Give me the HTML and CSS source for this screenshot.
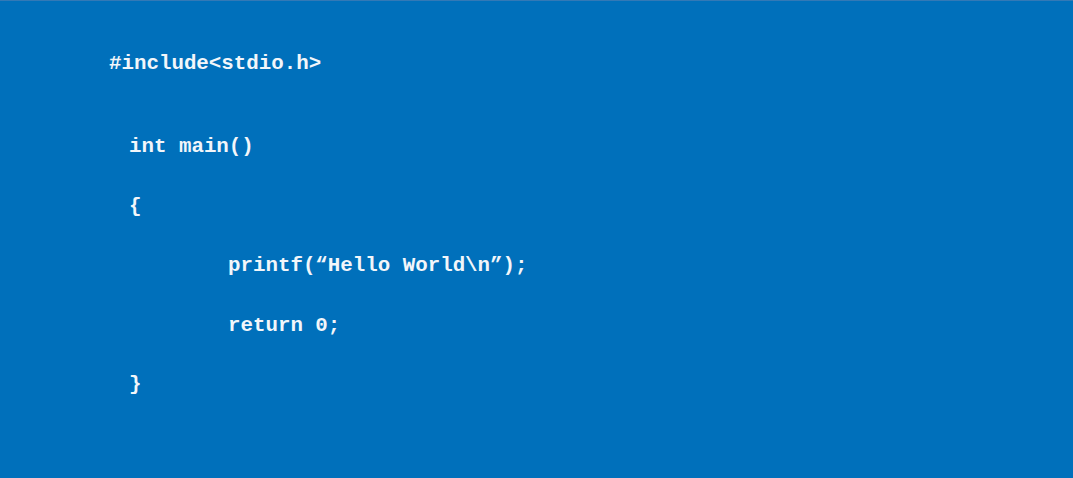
FILE: index.html
```html
<!DOCTYPE html>
<html>
<head>
<meta charset="utf-8">
<link rel="stylesheet" href="styles.css">
</head>
<body>
<div class="slide">
  <div class="code">
    <div class="line l0">#include&lt;stdio.h&gt;</div>
    <div class="line l1 first">int main()</div>
    <div class="line l1">{</div>
    <div class="line l2">printf(“Hello World\n”);</div>
    <div class="line l2">return 0;</div>
    <div class="line l1">}</div>
  </div>
</div>
</body>
</html>
```
FILE: styles.css
```css
html, body {
  margin: 0;
  padding: 0;
  width: 1073px;
  height: 478px;
  overflow: hidden;
  background: #0070bb;
}
.slide {
  box-sizing: border-box;
  width: 1073px;
  height: 478px;
  background: #0070bb;
  border-top: 1px solid #3379b6;
  padding-top: 33px;
}
.code {
  display: flex;
  flex-direction: column;
  font-family: "Liberation Mono", "Courier New", monospace;
  font-weight: bold;
  font-size: 20.8px;
  color: #f2f6fa;
  white-space: pre;
}
.line {
  height: 59.5px;
  line-height: 59.5px;
}
.first {
  margin-top: 23.5px;
}
.l0 { padding-left: 109px; }
.l1 { padding-left: 129px; }
.l2 { padding-left: 228px; }
```
